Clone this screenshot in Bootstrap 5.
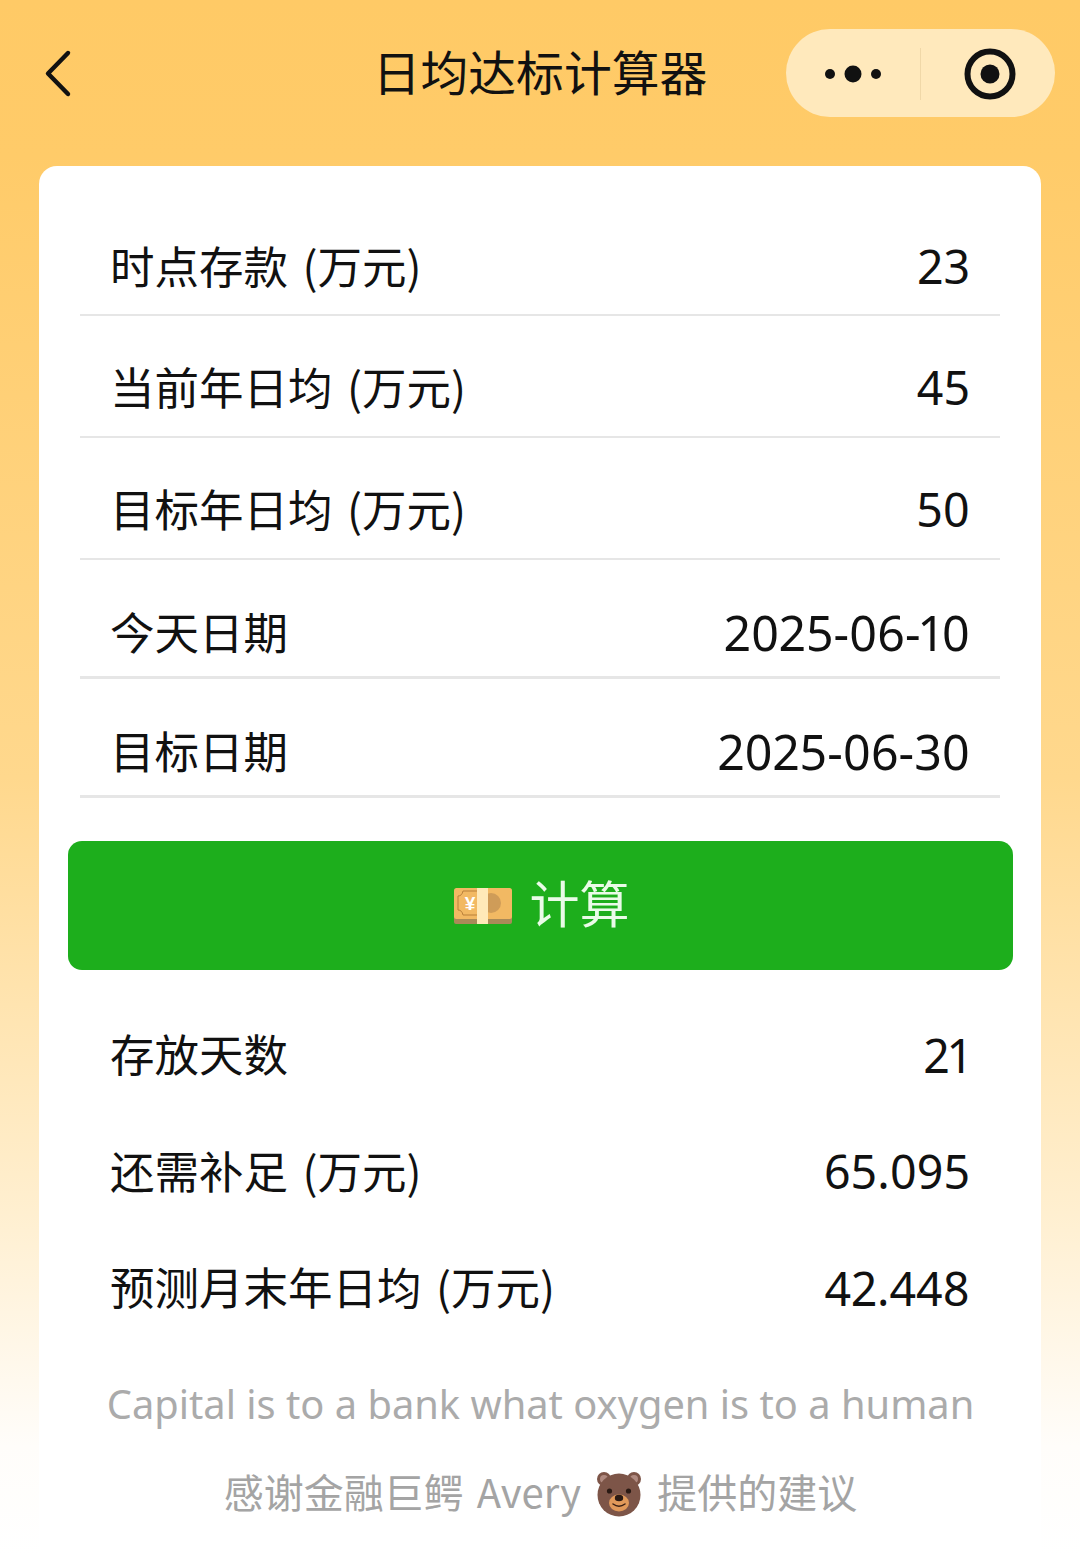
<!DOCTYPE html>
<html lang="zh">
<head>
<meta charset="utf-8">
<title>日均达标计算器</title>
<link href="https://cdn.jsdelivr.net/npm/bootstrap@5.3.0/dist/css/bootstrap.min.css" rel="stylesheet">
<style>
html,body{height:1555px;overflow:hidden}
body{font-family:"Noto Sans CJK SC","Noto Sans",sans-serif;background:linear-gradient(180deg,#ffca66 0,#ffcb69 10%,#ffd88d 50%,#ffefd0 78%,#fffdfa 93%,#fff 100%);color:#111}
.topbar{display:grid;grid-template-columns:1fr auto 1fr;height:166px;align-items:center;padding:0 25px 20px 25px}
.back-btn{margin:2px 0 0 19px}
.page-title{font-size:47.8px;line-height:1;font-weight:400;margin:0 0 5px 0}
.capsule{width:269px;height:88px;background:#ffe9bc;border-radius:44px;padding-top:2px}
.capsule-half{flex:1 1 0}
.capsule-sep{width:1px;height:52px;background:#f0d8a8}
.target-icon{margin-left:4px}
.panel{margin:0 39px;background:#fff;border-radius:18px 18px 0 0;height:1389px;padding:29px 28px 0 29px}
.input-row{height:122px;margin:0 13px 0 12px;padding:48px 30px 0 30px;font-size:44.5px;border-bottom:2.5px solid #e6e6e6;line-height:1;word-spacing:4.5px}
.input-row.date-row{height:119px;border-bottom-width:3px;padding-top:49px}
.input-row:first-child{height:121px}
.num{font-family:"Noto Sans",sans-serif;font-size:46.5px;font-variant-numeric:proportional-nums}
.date-row .num{font-size:48.3px;margin-top:-1px}
.calc-btn{height:129px;background:#1dae1c;border-radius:14px;margin-top:43px;font-size:50px;color:#eafbe8;gap:18px;padding:0 0 0 2px;line-height:1}
.calc-btn:hover,.calc-btn:active{background:#1dae1c;color:#eafbe8}
.calc-btn span{margin-bottom:10px}
.result-row{height:116.5px;margin:0 13px 0 12px;padding:0 30px 0 30px;font-size:44.5px;line-height:1;word-spacing:4.5px}
.result-row .num{padding-top:3px}
.results{margin-top:25px}
.foot-en{font-family:"Noto Sans",sans-serif;font-size:39.8px;color:#ababab;text-align:center;margin:39px 0 0;line-height:1}
.foot-zh{font-size:40px;color:#a4a4a4;line-height:1;margin-top:42px;gap:15px;word-spacing:4px}
.foot-zh svg{margin-top:6px}
</style>
</head>
<body>
<header class="topbar">
  <div class="back-btn">
    <svg width="30" height="50" viewBox="0 0 30 50" fill="none" stroke="#111" stroke-width="4.4" stroke-linecap="round" stroke-linejoin="round"><path d="M25 4 5 25l20 21" transform="translate(-1 0) scale(1 .98)"/></svg>
  </div>
  <h1 class="page-title">日均达标计算器</h1>
  <div class="d-flex justify-content-end">
    <div class="capsule d-flex align-items-center">
      <div class="capsule-half d-flex justify-content-center">
        <svg width="56" height="18" viewBox="0 0 56 18" fill="#111"><circle cx="5" cy="9" r="5"/><circle cx="28" cy="9" r="8.5"/><circle cx="51" cy="9" r="5"/></svg>
      </div>
      <div class="capsule-sep"></div>
      <div class="capsule-half d-flex justify-content-center">
        <svg class="target-icon" width="52" height="52" viewBox="0 0 52 52"><circle cx="26" cy="26" r="22.5" fill="none" stroke="#111" stroke-width="6"/><circle cx="26" cy="26" r="9.5" fill="#111"/></svg>
      </div>
    </div>
  </div>
</header>
<main class="panel">
  <div class="input-row d-flex justify-content-between align-items-start"><span>时点存款 (万元)</span><span class="num">23</span></div>
  <div class="input-row d-flex justify-content-between align-items-start"><span>当前年日均 (万元)</span><span class="num">45</span></div>
  <div class="input-row d-flex justify-content-between align-items-start"><span>目标年日均 (万元)</span><span class="num">50</span></div>
  <div class="input-row date-row d-flex justify-content-between align-items-start"><span>今天日期</span><span class="num">2025-06-10</span></div>
  <div class="input-row date-row d-flex justify-content-between align-items-start"><span>目标日期</span><span class="num">2025-06-30</span></div>
  <button type="button" class="btn calc-btn w-100 d-flex align-items-center justify-content-center border-0">
    <svg width="58" height="38" viewBox="0 0 58 38"><rect x="0" y="4" width="58" height="33" rx="2" fill="#a98a58"/><rect x="0" y="1" width="58" height="31" rx="2.5" fill="#f2b963"/><path d="M4 9q4 0 5-5h15v24H9q-1-5-5-5z" fill="none" stroke="#b9803a" stroke-width="1"/><circle cx="37" cy="16" r="10" fill="#cf9c58"/><text x="16" y="23" font-family="Liberation Sans,sans-serif" font-size="19" font-weight="700" fill="#fff" text-anchor="middle">¥</text><rect x="23" y="1" width="11" height="36" fill="#ffe9b8"/></svg>
    <span>计算</span>
  </button>
  <div class="results">
    <div class="result-row d-flex justify-content-between align-items-center"><span>存放天数</span><span class="num">21</span></div>
    <div class="result-row d-flex justify-content-between align-items-center"><span>还需补足 (万元)</span><span class="num">65.095</span></div>
    <div class="result-row d-flex justify-content-between align-items-center"><span>预测月末年日均 (万元)</span><span class="num">42.448</span></div>
  </div>
  <p class="foot-en">Capital is to a bank what oxygen is to a human</p>
  <div class="foot-zh d-flex align-items-center justify-content-center">
    <span>感谢金融巨鳄 Avery</span>
    <svg width="46" height="46" viewBox="0 0 46 46"><circle cx="8" cy="8" r="7" fill="#7d5548"/><circle cx="38" cy="8" r="7" fill="#7d5548"/><circle cx="8" cy="8" r="4" fill="#b08a80"/><circle cx="38" cy="8" r="4" fill="#b08a80"/><ellipse cx="23" cy="24" rx="21.5" ry="21.5" fill="#7d5548"/><circle cx="13.5" cy="20" r="2.6" fill="#2a1a14"/><circle cx="32.5" cy="20" r="2.6" fill="#2a1a14"/><ellipse cx="23" cy="32" rx="10" ry="8.5" fill="#e0995a"/><ellipse cx="23" cy="27" rx="4.2" ry="3.2" fill="#2a1a14"/><path d="M17 33q6 4.5 12 0" fill="none" stroke="#3a2014" stroke-width="1.5" stroke-linecap="round"/></svg>
    <span>提供的建议</span>
  </div>
</main>
<script src="https://cdn.jsdelivr.net/npm/bootstrap@5.3.0/dist/js/bootstrap.bundle.min.js"></script>
</body>
</html>
